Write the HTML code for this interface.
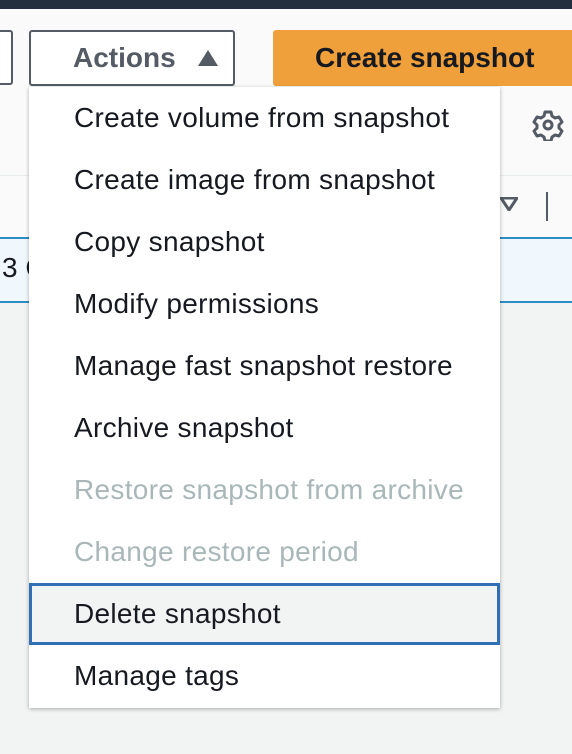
<!DOCTYPE html>
<html><head><meta charset="utf-8"><style>
*{margin:0;padding:0;box-sizing:border-box}
body{width:572px;height:754px;overflow:hidden;background:#f2f3f3;font-family:"Liberation Sans",sans-serif;position:relative}
.abs{position:absolute}
.menu{position:absolute;left:29px;top:87px;width:471px;height:621px;background:#fff;box-shadow:0 1px 4px rgba(0,0,0,.3)}
.it{height:62px;line-height:62px;padding-left:45px;font-size:28px;letter-spacing:.3px;color:#16191f;white-space:nowrap}
.dis{color:#aab7b8}
.sel{background:#f2f3f3;border:3px solid #3270b5;padding-left:42px;line-height:56px}
</style></head><body>
<div class="abs" style="left:0;top:0;width:572px;height:9px;background:#232f3e"></div>
<div class="abs" style="left:0;top:9px;width:572px;height:166px;background:#fafafa"></div>
<div class="abs" style="left:0;top:175px;width:572px;height:1px;background:#eaeded"></div>
<div class="abs" style="left:0;top:176px;width:572px;height:62px;background:#fafafa"></div>
<div class="abs" style="left:0;top:237px;width:572px;height:66px;background:#f1f8fd;border-top:2px solid #2b8ec4;border-bottom:2px solid #2b8ec4"></div>
<div class="abs" style="left:2px;top:252px;font-size:28px;color:#16191f">3 C</div>
<div class="abs" style="left:-4px;top:30px;width:17px;height:55px;border:2px solid #545b64;border-radius:3px;background:#fff"></div>
<div class="abs" style="left:29px;top:30px;width:206px;height:56px;border:2px solid #545b64;border-radius:3px;background:#fff;font-weight:bold;font-size:28px;color:#545b64;line-height:52px;padding-left:42px">Actions<svg style="position:absolute;left:167px;top:18px" width="20" height="16"><path d="M10 0L20 16H0Z" fill="#545b64"/></svg></div>
<div class="abs" style="left:273px;top:30px;width:310px;height:56px;background:#f0a03b;border-radius:3px;font-weight:bold;font-size:28px;color:#16191f;line-height:56px;padding-left:42px">Create snapshot</div>
<div class="abs" style="left:462px;top:97px;width:2px;height:57px;background:#eaeded"></div>
<svg class="abs" style="left:532px;top:109px" width="32" height="32" viewBox="0 0 32 32"><path d="M13 3h6l1 4 3 2 4-1 3 5-3 3v3l3 3-3 5-4-1-3 2-1 4h-6l-1-4-3-2-4 1-3-5 3-3v-3l-3-3 3-5 4 1 3-2z" fill="none" stroke="#545b64" stroke-width="3" stroke-linejoin="round"/><circle cx="16" cy="16" r="4" fill="none" stroke="#545b64" stroke-width="3"/></svg>
<svg class="abs" style="left:500px;top:197px" width="18" height="14"><path d="M1 1h16L9 13z" fill="none" stroke="#545b64" stroke-width="3" stroke-linejoin="round"/></svg>
<div class="abs" style="left:546px;top:192px;width:2px;height:29px;background:#545b64"></div>
<div class="menu">
<div class="it">Create volume from snapshot</div>
<div class="it">Create image from snapshot</div>
<div class="it">Copy snapshot</div>
<div class="it">Modify permissions</div>
<div class="it">Manage fast snapshot restore</div>
<div class="it">Archive snapshot</div>
<div class="it dis">Restore snapshot from archive</div>
<div class="it dis">Change restore period</div>
<div class="it sel">Delete snapshot</div>
<div class="it">Manage tags</div>
</div>
</body></html>
